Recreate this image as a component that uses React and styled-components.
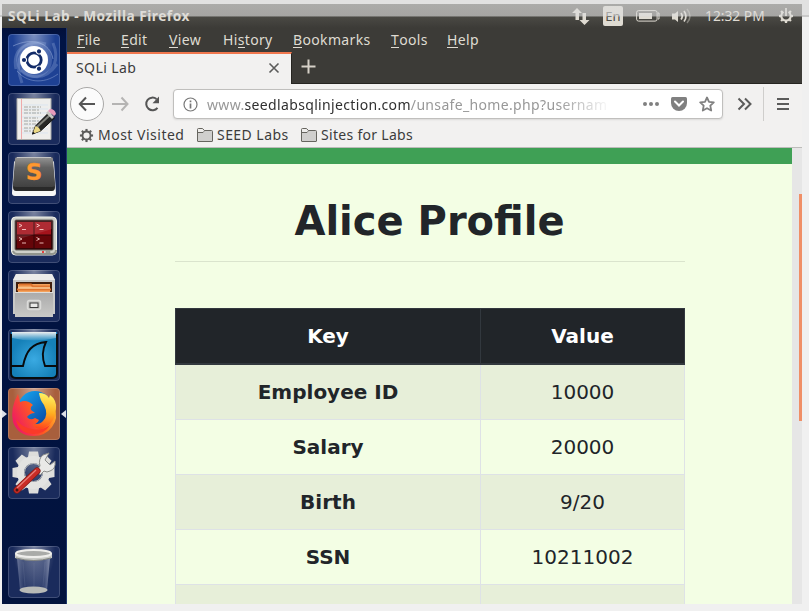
import React from "react";
import styled, { createGlobalStyle, css } from "styled-components";

const ui = `"Noto Sans", "Open Sans", sans-serif`;

const Global = createGlobalStyle`
  * { box-sizing: border-box; }
  body { margin: 0; background: #f0f0f0; overflow: hidden; }
  svg { display: block; flex: none; }
`;

const Frame = styled.div`
  width: 809px;
  height: 611px;
  padding: 4px 7px 7px 2px;
  background: linear-gradient(#e1e1e1 15px, #c9c9c9 15px 17px, #f0f0f0 17px);
`;
const Desktop = styled.div`
  display: grid;
  grid-template-rows: 24px 576px;
  width: 800px;
  height: 600px;
  overflow: hidden;
`;
const Panel = styled.header`
  position: relative;
  display: flex;
  align-items: center;
  justify-content: space-between;
  padding: 0 8px 0 6px;
  background: linear-gradient(#5a5953, #3c3b37);
  color: #dfdbd2;
  font: 13.8px/24px ${ui};
`;
const Veil = styled.div`
  position: absolute;
  inset: 0 0 auto 0;
  height: 13px;
  background: linear-gradient(rgba(221, 221, 221, 0.62) 12px, rgba(215, 215, 215, 0.3) 12px);
`;
const Label = styled.span`
  white-space: nowrap;
  letter-spacing: ${(p) => p.$track || 0}px;
`;
const PanelTitle = styled(Label)`
  font-weight: 700;
  font-size: 13.7px;
`;
const Indicators = styled.div`
  display: flex;
  align-items: center;
`;
const Slot = styled.div`
  width: ${(p) => p.$w}px;
  flex: none;
  white-space: nowrap;
`;
const LangBadge = styled.span`
  display: block;
  width: 20px;
  height: 20px;
  border-radius: 2px;
  background: #dfdbd2;
  color: #4b4a45;
  text-align: center;
  font: 13px/20px ${ui};
`;
const Body = styled.div`
  display: grid;
  grid-template-columns: 65px 735px;
  min-height: 0;
`;
const Launcher = styled.nav`
  display: flex;
  flex-direction: column;
  gap: 7px;
  padding: 6px 6px;
  background: linear-gradient(#02103a, #001344 12px, #02133e);
  border-right: 1px solid #20386e;
`;
const Tile = styled.div`
  position: relative;
  width: 52px;
  height: 52px;
  flex: none;
  border-radius: 4px;
  box-shadow: inset 0 0 0 1px rgba(255, 255, 255, 0.17);
  margin-top: ${(p) => (p.$last ? "auto" : 0)};
  background: radial-gradient(ellipse at 50% 0, rgba(255, 255, 255, 0.42), transparent 58%),
    ${(p) => p.$bg || "#1a2b5c"};
`;
const arrow = css`
  content: "";
  position: absolute;
  top: 22px;
  border: 4px solid transparent;
`;
const ActiveTile = styled(Tile)`
  &::before { ${arrow} left: -6px; border-left: 5px solid #dde0e8; border-right: 0; }
  &::after { ${arrow} right: -6px; border-right: 5px solid #dde0e8; border-left: 0; }
`;
const Browser = styled.main`
  display: flex;
  flex-direction: column;
  min-height: 0;
  color: #3c3c3c;
  font: 14px/20px ${ui};
`;
const MenuBar = styled.div`
  display: flex;
  height: 24px;
  flex: none;
  padding: 2px 0 0 10px;
  background: #3c3b37;
  color: #dfdbd2;
`;
const MenuItem = styled(Label)`
  width: ${(p) => p.$w}px;
  line-height: 20px;
`;
const Mnemonic = styled.span`
  display: inline-block;
  height: 18px;
  border-bottom: 1px solid #dfdbd2;
  line-height: 20px;
  vertical-align: top;
`;
const TabStrip = styled.div`
  display: flex;
  height: 32px;
  flex: none;
  background: #3c3b37;
  box-shadow: inset 0 -1px #262521;
`;
const Tab = styled.div`
  display: flex;
  align-items: center;
  justify-content: space-between;
  width: 225px;
  padding: 0 11px 3px 9px;
  border-top: 2px solid #f0774e;
  border-right: 1px solid #262521;
  background: #f2f1f0;
`;
const NewTab = styled.div`
  padding: 7px 9px;
`;
const NavBar = styled.div`
  display: flex;
  align-items: center;
  height: 40px;
  flex: none;
  padding-left: 3px;
  background: #f2f1f0;
`;
const BackButton = styled.div`
  display: grid;
  place-items: center;
  width: 34px;
  height: 34px;
  flex: none;
  border: 1px solid #a9a8a7;
  border-radius: 50%;
  background: #fbfbfb;
`;
const AddressBox = styled.div`
  display: flex;
  align-items: center;
  width: 550px;
  height: 30px;
  flex: none;
  padding: 0 6px 0 9px;
  border: 1px solid #c0bfbd;
  border-radius: 4px;
  background: #fff;
  box-shadow: 0 1px 2px rgba(0, 0, 0, 0.1);
`;
const Address = styled.div`
  width: 404px;
  margin: 1px 32px 0 9px;
  white-space: nowrap;
  color: #989898;
  letter-spacing: ${(p) => p.$track}px;
  mask-image: linear-gradient(90deg, #000 350px, transparent 404px);
  b { font-weight: 400; color: #303030; }
`;
const Actions = styled.div`
  display: flex;
  align-items: center;
  gap: 12px;
`;
const Divider = styled.div`
  width: 1px;
  height: 34px;
  margin: 0 13px 0 11px;
  background: #cfcecc;
`;
const Bookmarks = styled.div`
  display: flex;
  height: 24px;
  flex: none;
  padding-left: 12px;
  background: #f2f1f0;
  border-bottom: 1px solid #bdbcba;
`;
const Bookmark = styled.div`
  display: flex;
  align-items: center;
  gap: 4px;
  width: ${(p) => p.$w}px;
  padding-bottom: 1px;
`;
const Viewport = styled.div`
  display: grid;
  grid-template-columns: 725px 10px;
  flex: 1;
  min-height: 0;
  overflow: hidden;
`;
const Page = styled.section`
  height: 456px;
  overflow: hidden;
  padding: 0 107px 0 108px;
  border-top: 16px solid #3fa055;
  background: #f3fee4;
  color: #212529;
  font: 20px/30px "DejaVu Sans", sans-serif;
`;
const Heading = styled.h1`
  height: 98px;
  margin: 0 0 46px;
  padding: 33px 1px 0 0;
  border-bottom: 1px solid #dae4cd;
  text-align: center;
  font: 700 40px/48px "DejaVu Sans", sans-serif;
`;
const Table = styled.table`
  width: 509px;
  table-layout: fixed;
  border-collapse: collapse;
  text-align: center;
`;
const HeadCell = styled.th`
  height: 55px;
  width: ${(p) => p.$w}px;
  padding: 0 12px;
  border: 1px solid #32383e;
  border-bottom-width: 2px;
  background: #212529;
  color: #fff;
`;
const Row = styled.tr`
  background: ${(p) => (p.$odd ? "#e7efd9" : "#f3fee4")};
`;
const Cell = styled.td`
  height: 55px;
  padding: 12px 0;
  border: 1px solid #dee2e6;
  font-weight: ${(p) => (p.$key ? 700 : 400)};
`;
const Scrollbar = styled.div`
  padding: 46px 0 0 7px;
  background: #e6e6e6;
`;
const Thumb = styled.div`
  width: 3px;
  height: 227px;
  background: #f08f67;
`;

const Icon = ({ w = 16, h = w, children, ...p }) => (
  <svg width={w} height={h} viewBox={`0 0 ${w} ${h}`} fill="none" {...p}>{children}</svg>
);

const Transfer = () => (
  <Icon w={18} h={18} fill="#dfdbd2">
    <path d="M5 1l5 5H7v7H3.500V6H0zM10.500 6H14v7h3.500L12.500 18 7.500 13h3z" />
  </Icon>
);
const Battery = () => (
  <Icon w={24} h={12} stroke="#dfdbd2">
    <rect x=".6" y=".6" width="20.500" height="10.500" rx="2" />
    <path d="M22 3h1v6h-1" />
    <rect x="3" y="3" width="13" height="6" fill="#dfdbd2" stroke="none" />
  </Icon>
);
const Speaker = () => (
  <Icon w={20} h={16}>
    <path d="M0 5.500h3L6 3v11l-3-2.500H0z" fill="#dfdbd2" />
    <path d="M9 5q2.500 3.300 0 6.500M12 3q4 5.300 0 10.500" stroke="#dfdbd2" strokeWidth="1.700" />
    <path d="M15 1q6 7.300 0 14" stroke="#dfdbd2" strokeWidth="1.500" opacity=".4" />
  </Icon>
);
const Cog = ({ size, color, power }) => (
  <svg width={size} height={size} viewBox="0 0 16 16" fill="none" stroke={color}>
    {[0, 45, 90, 135, 180, 225, 270, 315].map((a) =>
      power && a === 0 ? null : (
        <path key={a} d="M8 1v2.800" strokeWidth="2.300" transform={`rotate(${a} 8 8)`} />
      )
    )}
    {power ? (
      <>
        <path d="M5.400 4A4.700 4.700 0 1 0 10.600 4" strokeWidth="2" />
        <path d="M8 0v8" strokeWidth="1.700" />
      </>
    ) : (
      <circle cx="8" cy="8" r="4.300" strokeWidth="2" />
    )}
  </svg>
);
const Folder = () => (
  <Icon w={16} h={14} stroke="#66655f">
    <path d="M.5 13V1.500Q.5.500 1.500.500h4l2 2h7q1 0 1 1V13q0 .5-.5.5H1Q.5 13.500.5 13z" fill="#d0cfcd" />
    <path d="M1 4.500h5l1.500-2" />
    <path d="M1 4h5l1-1.500L5 1H1z" fill="#eeedeb" stroke="none" />
  </Icon>
);

const DashIcon = () => (
  <Icon w={52}>
    <g stroke="#a9bde6" strokeWidth="3" opacity=".28">
      <path d="M8 35C4 16 18 5 38 10M14 49C7 30 10 18 25 12M45 9C52 26 45 38 34 42M49 30C36 48 22 44 13 36" />
    </g>
    <circle cx="26" cy="26" r="18" fill="#a9bde6" opacity=".25" />
    <path d="M5 12C24 3 42 8 45 25" stroke="#a9bde6" opacity=".5" />
    <path d="M9 37C18 48 35 51 50 40" stroke="#a9bde6" opacity=".4" />
    <circle cx="26" cy="26" r="14" fill="#fff" />
    <circle cx="26" cy="26" r="7.200" stroke="#122b68" strokeWidth="2.800" />
    {[60, 180, 300].map((a) => (
      <g key={a} transform={`rotate(${a} 26 26)`}>
        <circle cx="36" cy="26" r="3.100" fill="#fff" />
        <circle cx="36" cy="26" r="2.100" fill="#122b68" />
      </g>
    ))}
  </Icon>
);
const EditorIcon = () => (
  <Icon w={52}>
    <path d="M9 5.500h34v41H9z" fill="#eeeeec" stroke="#aaaba8" />
    <path d="M13.500 6v40" stroke="#efaaaa" />
    <path d="M14 12h26M14 16h26M14 20h26M14 24h26M14 28h26M14 32h26M14 36h26M14 40h26" stroke="#dbe5f0" />
    <path d="M16 14h17M16 17h15M16 20h17M16 25h14M16 28h16M16 31h14M16 35h11M16 38h9" stroke="#a6a8a3" strokeDasharray="4 1 2 1" />
    <path d="M24.500 41l3-8 13-13 6 5-14 13z" fill="#252726" stroke="#111" />
    <path d="M29 34l13-12" stroke="#81837d" strokeWidth="2" />
    <path d="M24.500 41l3-8q4 1 5 5z" fill="#ebd985" />
    <path d="M24 41.500l1-3 2 2z" fill="#111" />
    <path d="M38 20l2-2 6 6-2 2z" fill="#c7c8c2" />
    <path d="M40 18l2-2q5 0 6 5l-2 2z" fill="#e69bbb" />
  </Icon>
);
const SublimeIcon = () => (
  <Icon w={52}>
    <defs><linearGradient id="key" x2="0" y2="1"><stop stopColor="#969696" /><stop offset=".35" stopColor="#626262" /><stop offset="1" stopColor="#414141" /></linearGradient></defs>
    <path d="M6 10Q7 8 9 8h34q2 0 3 2l2 31q0 3-3 3H7q-3 0-3-3z" fill="#f7f7f7" />
    <path d="M9 5h35l3 30q0 4-3 4H8q-3 0-3-4z" fill="#292929" />
    <path d="M10 5h32q3 0 3 2l2 25q0 3-3 3H8q-3 0-3-3L7 7q0-2 3-2z" fill="url(#key)" />
    <path d="M9 5.500h34" stroke="#c5c5c5" />
    <text x="26" y="28" textAnchor="middle" fill="#ff982f" stroke="#eb862b" strokeWidth=".3" fontFamily="DejaVu Sans, sans-serif" fontWeight="700" fontSize="23">S</text>
  </Icon>
);
const TerminalIcon = () => (
  <Icon w={52}>
    <rect x="3.500" y="6" width="45" height="38" rx="4" fill="#cfd0c9" stroke="#f1f2eb" />
    <path d="M5 40q1 3 4 3h35q4 0 4-4" stroke="#92958d" strokeWidth="2" />
    <rect x="7" y="9" width="38" height="30" rx="1" fill="#320506" stroke="#676963" />
    {[[9, 11], [26.500, 11], [9, 24.500], [26.500, 24.500]].map(([x, y]) => (
      <g key={`${x}-${y}`}>
        <rect x={x} y={y} width="16.500" height="12.500" fill={y < 20 ? "#a5131c" : "#650509"} />
        <path d={`M${x + 2} ${y + 2}l3 1.500-3 1.500M${x + 5} ${y + 7.500}h4`} stroke="#ffd5cf" opacity=".85" />
      </g>
    ))}
    <path d="M8 10h36v8L8 29z" fill="#fff" opacity=".1" />
    <circle cx="35" cy="41" r="1" fill="#ef1111" />
    <rect x="38" y="40" width="4" height="2" fill="#a3a59f" stroke="#858780" strokeWidth=".5" />
  </Icon>
);
const FilesIcon = () => (
  <Icon w={52}>
    <defs><linearGradient id="drawer" x2="0" y2="1"><stop stopColor="#aaa" /><stop offset="1" stopColor="#c9c9c7" /></linearGradient></defs>
    <path d="M8 4h36l3 6v34H5V10z" fill="#c9c9c7" />
    <path d="M8 4h36l3 6H5z" fill="#ececea" />
    <path d="M8 12h36v10H8z" fill="#42200e" />
    <path d="M10 14h32v8H10z" fill="#f3a25d" />
    <path d="M11 14.500h12l2 2h17M9 19.500h34" stroke="#e0752f" strokeWidth="2" />
    <path d="M10 18h32" stroke="#ffe3b8" />
    <path d="M7 22h38v25H7z" fill="url(#drawer)" />
    <path d="M7 22.500h38" stroke="#dddddb" />
    <rect x="19.500" y="30.500" width="13" height="9" rx="2" fill="#c0c0be" stroke="#dbdbd9" strokeWidth="1.500" />
    <rect x="22" y="33" width="8" height="4.500" fill="#e9e9e7" stroke="#3b3b3b" />
  </Icon>
);
const WiresharkIcon = () => (
  <Icon w={52}>
    <defs>
      <radialGradient id="sea" cy=".6"><stop stopColor="#3aaae2" /><stop offset="1" stopColor="#1580b8" /></radialGradient>
      <linearGradient id="gloss" x2="0" y2="1"><stop stopColor="#eee" /><stop offset="1" stopColor="#d8edf8" stopOpacity=".1" /></linearGradient>
    </defs>
    <path d="M3 3h46v41q0 5-5 5H8q-5 0-5-5z" fill="url(#sea)" />
    <path d="M4 3h44v6Q26 14 4 9z" fill="url(#gloss)" />
    <path d="M3 5v39q0 5 5 5h36q5 0 5-5V5M3 37h12C18 22 24 14 38 13C34 21 34 29 37 37h12" stroke="#080b0d" strokeWidth="1.900" />
  </Icon>
);
const FirefoxIcon = () => (
  <Icon w={52}>
    <defs>
      <linearGradient id="fox" x1="0" y1=".7" x2="1" y2=".2"><stop stopColor="#ed1668" /><stop offset=".5" stopColor="#ff5b20" /><stop offset="1" stopColor="#ffc72d" /></linearGradient>
      <linearGradient id="tail" x1=".5" y1="1" x2=".6" y2="0"><stop stopColor="#ff471d" /><stop offset=".45" stopColor="#ffad20" /><stop offset="1" stopColor="#fff564" /></linearGradient>
      <linearGradient id="globe" x2="1" y2="1"><stop stopColor="#16aaf4" /><stop offset="1" stopColor="#083d99" /></linearGradient>
    </defs>
    <circle cx="27" cy="20" r="17" fill="url(#globe)" />
    <path d="M10 6l2 8q7-3 13 3-3 2-2 5l4 3q-5 0-8 4 3 4 8 1l4 2q-2 5-9 5l18-2 6-15q5 10-2 19-7 9-18 9Q10 48 5 34 2 20 10 6z" fill="url(#fox)" />
    <path d="M31 5q1 7 5 12 5 10-1 16-4 4-10 3 4 8 13 3 9-5 10-18 1-9-6-14l-1 3q-3-5-10-5z" fill="url(#tail)" />
    <path d="M8 31q2 14 17 15 12 0 17-9-8 6-18 4Q13 39 8 31z" fill="#fa3a29" />
  </Icon>
);
const SettingsIcon = () => (
  <Icon w={52}>
    <g fill="#dddddb">
      {[0, 45, 90, 135, 180, 225, 270, 315].map((a) => (
        <path key={a} d="M21 4.500h9l1.500 8h-12z" transform={`rotate(${a} 25.500 25.500)`} />
      ))}
    </g>
    <circle cx="25.500" cy="25.500" r="13" stroke="#e3e3e1" strokeWidth="7" />
    <circle cx="25.500" cy="25.500" r="9" stroke="#b9bbb9" />
    <path d="M29 23l3-4q-2-7 3-11l6-2-4 7 5 5 5-4q1 8-5 10-3 2-6 0l-4 4z" fill="#e9e9e7" stroke="#8c8e8b" />
    <path d="M9 43L29 24" stroke="#811b17" strokeWidth="7" strokeLinecap="round" />
    <path d="M9 43L29 24" stroke="#c92c26" strokeWidth="5.500" strokeLinecap="round" />
    <path d="M9 41L28 23" stroke="#e98179" strokeWidth="1.200" />
    <circle cx="9" cy="43" r="1.500" fill="#461614" />
  </Icon>
);
const TrashIcon = () => (
  <Icon w={52}>
    <defs><linearGradient id="bin" x2="1"><stop stopColor="#aab3cc" stopOpacity=".5" /><stop offset=".2" stopColor="#536087" stopOpacity=".35" /><stop offset=".8" stopColor="#66739b" stopOpacity=".35" /><stop offset="1" stopColor="#c2c8da" stopOpacity=".6" /></linearGradient></defs>
    <path d="M9 12l3 32q13 6 27 0l3-32z" fill="url(#bin)" />
    <ellipse cx="25.500" cy="44" rx="14" ry="3.500" fill="#b8bab7" />
    <path d="M15 16l2 24M26 17v23M37 16l-2 24" stroke="#8792b0" opacity=".2" />
    <path d="M7 7v5q18 5 37 0V7q-18 7-37 0z" fill="#c8cac6" />
    <ellipse cx="25.500" cy="7.500" rx="17.500" ry="3.500" fill="#a9aba8" stroke="#eeeeeb" strokeWidth="2" />
    <path d="M8 12q18 5 35 0" stroke="#80837f" />
  </Icon>
);

const launchers = [
  [DashIcon, "#1e4194"],
  [EditorIcon],
  [SublimeIcon],
  [TerminalIcon],
  [FilesIcon],
  [WiresharkIcon],
];
const menus = [
  ["File", 44], ["Edit", 48], ["View", 54], ["History", 70],
  ["Bookmarks", 98], ["Tools", 56], ["Help", 50],
];
const profile = [
  ["Employee ID", "10000"], ["Salary", "20000"], ["Birth", "9/20"], ["SSN", "10211002"], ["", ""],
];

export default function App() {
  return (
    <Frame>
      <Global />
      <Desktop>
        <Panel>
          <PanelTitle $track={0.5}>SQLi Lab - Mozilla Firefox</PanelTitle>
          <Indicators>
            <Slot $w={31}><Transfer /></Slot>
            <Slot $w={33}><LangBadge>En</LangBadge></Slot>
            <Slot $w={36}><Battery /></Slot>
            <Slot $w={33}><Speaker /></Slot>
            <Slot $w={73}>12:32 PM</Slot>
            <Cog size={16} color="#dfdbd2" power />
          </Indicators>
          <Veil />
        </Panel>
        <Body>
          <Launcher>
            {launchers.map(([Art, bg], i) => <Tile key={i} $bg={bg}><Art /></Tile>)}
            <ActiveTile $bg="#a85f3d"><FirefoxIcon /></ActiveTile>
            <Tile><SettingsIcon /></Tile>
            <Tile $last><TrashIcon /></Tile>
          </Launcher>
          <Browser>
            <MenuBar>
              {menus.map(([m, w]) => (
                <MenuItem key={m} $w={w} $track={0.35}>
                  {m === "History" ? <>Hi<Mnemonic>s</Mnemonic>tory</> : <><Mnemonic>{m[0]}</Mnemonic>{m.slice(1)}</>}
                </MenuItem>
              ))}
            </MenuBar>
            <TabStrip>
              <Tab>
                <Label $track={0.4}>SQLi Lab</Label>
                <Icon w={12} stroke="#5b5b5a" strokeWidth="1.600"><path d="M1.500 1.500l9 9M10.500 1.500l-9 9" /></Icon>
              </Tab>
              <NewTab><Icon w={15} stroke="#d6d1c8" strokeWidth="2"><path d="M7.500.5v14M.5 7.500h14" /></Icon></NewTab>
            </TabStrip>
            <NavBar>
              <BackButton>
                <Icon w={18} h={16} stroke="#555" strokeWidth="2"><path d="M8 1.500L1.800 8 8 14.500M2 8h15" /></Icon>
              </BackButton>
              <Slot $w={39}>
                <Icon w={32} h={16} stroke="#b5b4b3" strokeWidth="2"><path d="M17.500 1.500L23.500 8l-6 6.500M8 8h15" /></Icon>
              </Slot>
              <Slot $w={30}>
                <Icon w={18} h={18} stroke="#555" strokeWidth="2"><path d="M14.500 12.800A6.300 6.300 0 1 1 13.500 4" /><path d="M16 1.500v6.800H9.500z" fill="#555" stroke="none" /></Icon>
              </Slot>
              <AddressBox>
                <Icon w={15} stroke="#777" strokeWidth="1.200"><circle cx="7.500" cy="7.500" r="6.500" /><path d="M7.500 6.500v5M7.500 3.500v1.800" strokeWidth="1.700" /></Icon>
                <Address $track={0.34}>www.<b>seedlabsqlinjection.com</b>/unsafe_home.php?usernam</Address>
                <Actions>
                  <Icon w={16} h={4} fill="#808080"><circle cx="2" cy="2" r="2" /><circle cx="8" cy="2" r="2" /><circle cx="14" cy="2" r="2" /></Icon>
                  <Icon w={16} h={14}><path d="M1.500 0h13Q16 0 16 1.500V6A8 8 0 0 1 0 6V1.500Q0 0 1.500 0z" fill="#808080" /><path d="M4 4.500l4 4 4-4" stroke="#fff" strokeWidth="2" strokeLinecap="round" /></Icon>
                  <Icon w={16} stroke="#808080" strokeWidth="1.800"><path d="M8 1.500l2 4.300 4.800.6-3.500 3.300.9 4.800L8 12.200l-4.200 2.300.9-4.800L1.200 6.400 6 5.800z" strokeLinejoin="round" /></Icon>
                </Actions>
              </AddressBox>
              <Slot $w={29}>
                <Icon w={29} h={14} stroke="#5b5b5a" strokeWidth="2"><path d="M15.500 1.500L21 7l-5.500 5.500M22 1.500L27.500 7 22 12.500" /></Icon>
              </Slot>
              <Divider />
              <Icon w={12} h={12} stroke="#5b5b5a" strokeWidth="2"><path d="M0 1h12M0 6h12M0 11h12" /></Icon>
            </NavBar>
            <Bookmarks>
              <Bookmark $w={118}><Cog size={15} color="#5b5b5a" /><Label $track={0.5}>Most Visited</Label></Bookmark>
              <Bookmark $w={104}><Folder /><Label $track={0.45}>SEED Labs</Label></Bookmark>
              <Bookmark $w={120}><Folder /><Label $track={0.3}>Sites for Labs</Label></Bookmark>
            </Bookmarks>
            <Viewport>
              <Page>
                <Heading>Alice Profile</Heading>
                <Table>
                  <thead><tr><HeadCell $w={305}>Key</HeadCell><HeadCell $w={204}>Value</HeadCell></tr></thead>
                  <tbody>
                    {profile.map(([k, v], i) => (
                      <Row key={i} $odd={i % 2 === 0}><Cell $key>{k}</Cell><Cell>{v}</Cell></Row>
                    ))}
                  </tbody>
                </Table>
              </Page>
              <Scrollbar><Thumb /></Scrollbar>
            </Viewport>
          </Browser>
        </Body>
      </Desktop>
    </Frame>
  );
}
